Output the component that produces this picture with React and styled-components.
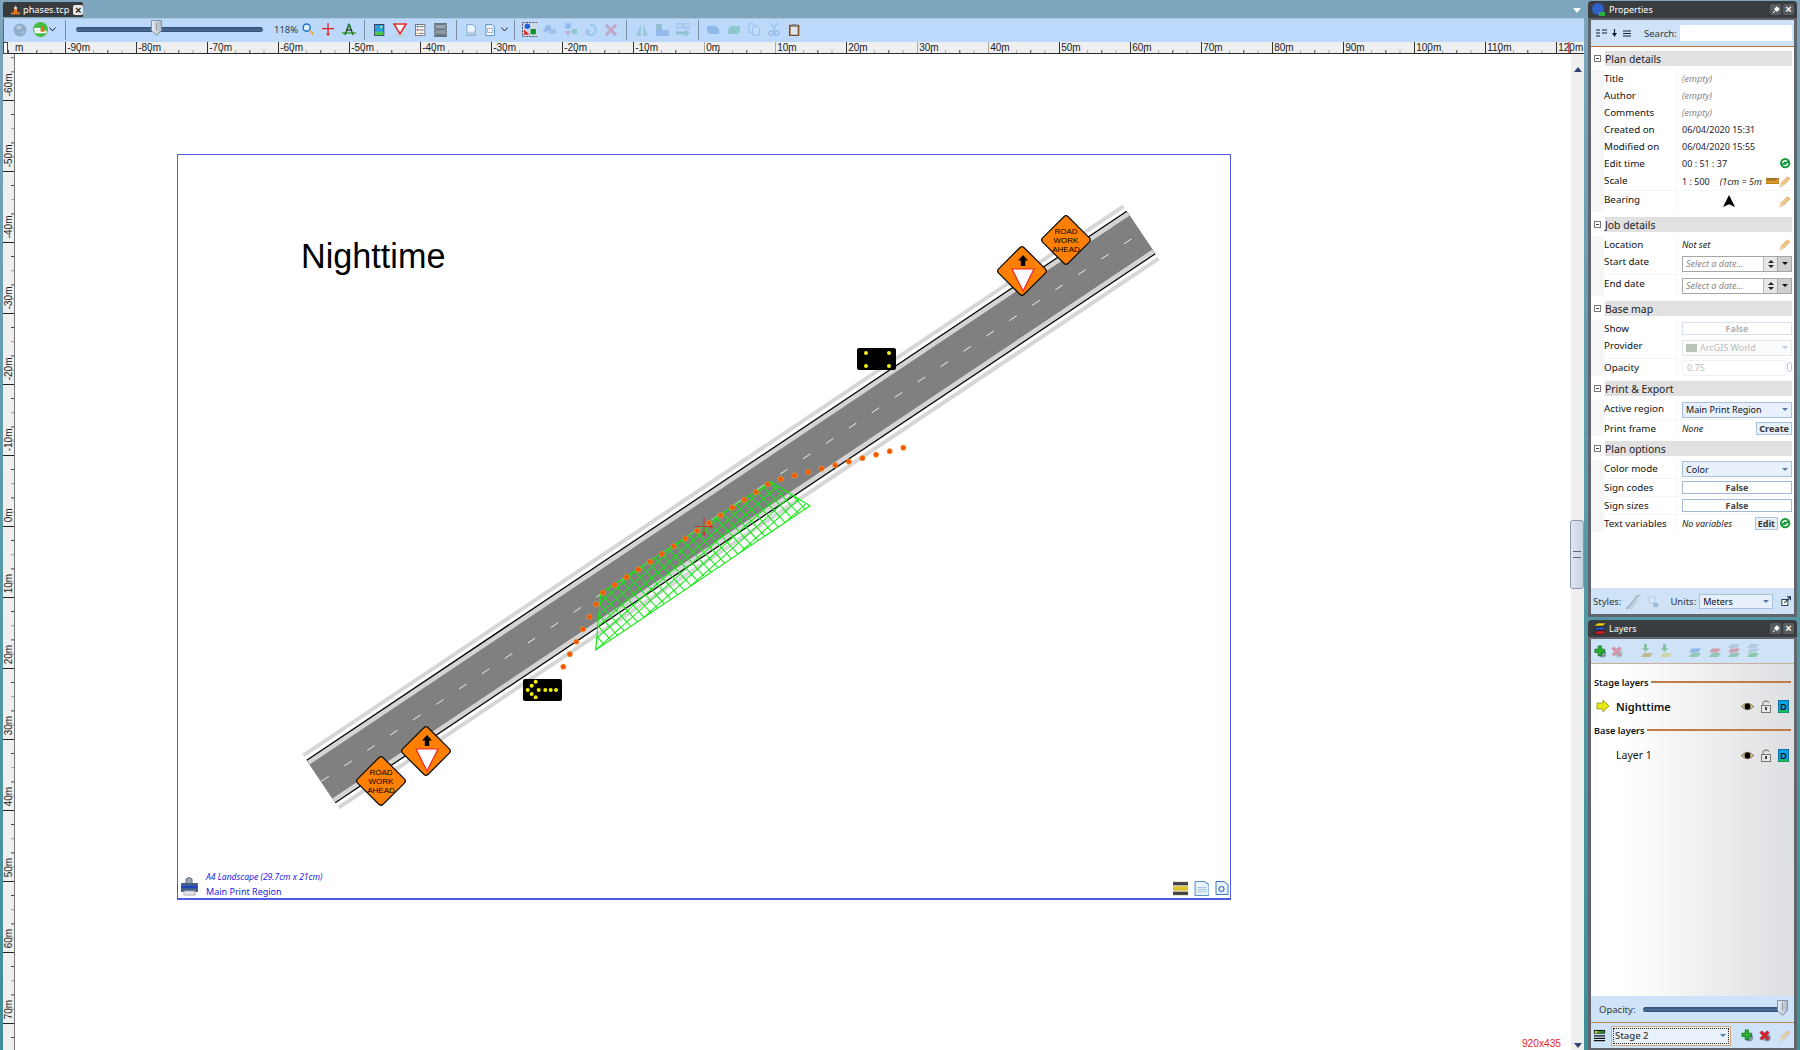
import React from "react";
import styled, { createGlobalStyle } from "styled-components";

const Global = createGlobalStyle`
  html, body { margin: 0; padding: 0; overflow: hidden; background: #fff; }
  * { box-sizing: border-box; }
`;
const UI = `"Noto Sans", "Open Sans", sans-serif`;
const ARIAL = `"Liberation Sans", Arial, sans-serif`;

const Root = styled.div`
  width: 1800px; height: 1050px; display: flex; overflow: hidden;
  font-family: ${UI}; color: #111;
  background: linear-gradient(180deg, #7ea5be 0%, #5f9cac 40%, #3d8f98 100%);
`;
const Main = styled.div`
  width: 1584px; height: 100%; display: flex; flex-direction: column; padding-left: 3px;
`;
const TabBar = styled.div`
  height: 18px; margin-left: -3px; padding: 2px 0 1px 3px; background: #7ea5be;
  display: flex; align-items: stretch; justify-content: space-between;
`;
const DocTab = styled.div`
  width: 80px; background: #383b3e; color: #fff; font-size: 9.2px; line-height: 15px;
  display: flex; align-items: center; gap: 3px; padding-left: 8px; border-radius: 2px 2px 0 0;
`;
const TabClose = styled.span`
  width: 10px; height: 10px; border-radius: 2px; background: #e8e8e8; color: #222; margin-left: 1px;
  font: bold 11px/10px ${ARIAL}; text-align: center;
`;
const TabMenu = styled.span`
  width: 0; height: 0; margin: 6px 3px 0 0; border: 4px solid transparent; border-top: 5px solid #fff; border-bottom: 0;
`;
const Toolbar = styled.div`
  height: 24px; background: #bcd9fb; display: flex; align-items: center; padding: 0 0 2px 9px;
  border-left: 1px solid #4f6f88; border-top: 1px solid #a9c6de;
`;
const Btn = styled.span`
  width: ${p => p.$w || 20.5}px; height: 16px; flex: none; display: flex; align-items: center; justify-content: center;
  margin-left: ${p => p.$ml || 0}px;
`;
const Sep = styled.span`
  width: 1px; height: 20px; flex: none; background: #7c8ea1; margin: 0 ${p => p.$mr ?? 4.5}px 0 ${p => p.$ml ?? 4.5}px;
`;
const Percent = styled.span`
  width: 24px; margin-left: 11px; font-size: 9.5px; color: #2d4050; flex: none; white-space: nowrap;
`;
const Track = styled.div`
  position: relative; width: ${p => p.$w}px; height: 5px; flex: none; border-radius: 3px;
  background: linear-gradient(180deg, #2f4f78, #4d6f96 60%, #30496b);
`;
const Thumb = styled.svg`
  position: absolute; left: ${p => p.$left}px; top: -7px; width: 11px; height: 16px;
`;
const RulerSvg = styled.svg`
  display: block; flex: none; background: #efefef;
`;
const Body = styled.div`
  flex: 1; min-height: 0; display: flex;
`;
const Canvas = styled.div`
  position: relative; flex: 1; background: #fff; overflow: hidden;
`;
const Drawing = styled.svg`
  position: absolute; left: 0; top: 0; width: 1556px; height: 996px;
`;
const Paper = styled.div`
  position: absolute; left: 162px; top: 100px; width: 1054px; height: 746px; border: 2px solid #4f5ce6;
  border-top-width: 1px; border-left-width: 1px; border-right-width: 1px;
`;
const PlanTitle = styled.div`
  position: absolute; left: 123px; top: 80px; font: 34.2px/42px ${ARIAL}; color: #000;
`;
const PaperInfo = styled.div`
  position: absolute; left: 3px; bottom: -1px; display: flex; align-items: flex-end; gap: 8px; color: #1c1ce0;
`;
const PrinterSlot = styled.span`
  margin-bottom: 3px;
`;
const PaperText = styled.div`
  font-size: 9px; line-height: 14.5px; white-space: nowrap;
`;
const PaperSize = styled.div`
  font-style: italic; font-size: 8.55px;
`;
const PaperTools = styled.div`
  position: absolute; right: 1px; bottom: 2px; display: flex; gap: 6px;
`;
const Dim = styled.div`
  position: absolute; right: 10px; bottom: 0; font: 10.2px/13px ${ARIAL}; color: #f02020;
`;
const Scroll = styled.div`
  width: 13px; background: #efefef; position: relative; display: flex; flex-direction: column; align-items: center; justify-content: space-between;
  padding: 13px 0 2px;
`;
const Arrow = styled.span`
  width: 0; height: 0; border: 4px solid transparent; border-left-width: 4px;
  ${p => p.$down ? `border-top: 5px solid #2f3f70; border-bottom: 0;` : `border-bottom: 5px solid #2f3f70; border-top: 0;`}
`;
const ScrollThumb = styled.div`
  position: absolute; top: 466px; left: -1px; width: 14px; height: 69px; border: 1px solid #8a97ad; border-radius: 3px;
  background: linear-gradient(90deg, #dfe6ef, #c7d3e2);
  display: flex; align-items: center; justify-content: center;
  &::after { content: ""; width: 8px; height: 5px; border-top: 1px solid #667; border-bottom: 1px solid #667; }
`;

const Side = styled.div`
  width: 216px; height: 100%; padding: 1px 3px 0 4px; display: flex; flex-direction: column; gap: 3px;
`;
const Panel = styled.div`
  display: flex; flex-direction: column; background: #60666b; border-radius: 4px 4px 0 0;
  padding: 0 3px 3px 3px; flex: ${p => p.$grow ? 1 : "none"}; height: ${p => p.$h ? p.$h + "px" : "auto"}; min-height: 0;
  padding-bottom: ${p => p.$pb ?? 3}px;
`;
const PanelHead = styled.div`
  height: 17px; margin: 0 -3px; padding: 0 3px 0 4px; background: #3a3d40; border-radius: 4px 4px 0 0; color: #fff;
  font-size: 9px; display: flex; align-items: center; gap: 3px; flex: none;
`;
const HeadBtn = styled.span`
  width: 11px; height: 11px; background: #5a5d60; border-radius: 2px; color: #fff; display: flex; align-items: center; justify-content: center;
  font: bold 11px/11px ${ARIAL}; margin-left: ${p => p.$auto ? "auto" : "-1px"};
`;
const PanelInner = styled.div`
  flex: 1; min-height: 0; margin-top: 2px; display: flex; flex-direction: column; background: #fff;
`;
const BlueBar = styled.div`
  height: ${p => p.$h}px; flex: none; background: #cfe3f8; display: flex; align-items: center;
  padding: 0 ${p => p.$pr ?? 2}px 0 ${p => p.$pl ?? 3}px;
  border-bottom: ${p => p.$line ? `1px solid ${p.$line}` : "0"};
  border-top: ${p => p.$top ? `1px solid ${p.$top}` : "0"};
  font-size: 9.5px; color: #333;
`;
const SearchLabel = styled.span`
  margin-left: 13px; font-size: 9.5px; color: #333; white-space: nowrap;
`;
const SearchBox = styled.span`
  flex: 1; height: 16px; background: #fff; border-radius: 2px; margin-left: 3px;
`;
const PropList = styled.div`
  flex: 1; padding-top: 4px; display: flex; flex-direction: column; background: #fff; min-height: 0;
`;
const Section = styled.section`
  margin-bottom: 5px;
`;
const SecHead = styled.div`
  display: flex; align-items: center; height: 15px; margin-bottom: 4px;
`;
const Toggle = styled.span`
  width: 7px; height: 7px; margin: 0 4px 0 3px; border: 1px solid #777; position: relative; flex: none;
  &::after { content: ""; position: absolute; left: 1px; right: 1px; top: 2px; height: 1px; background: #444; }
`;
const SecTitle = styled.div`
  flex: 1; height: 15px; margin-right: 2px; background: #e1e1e1; font-size: 10.4px; line-height: 16px; color: #222;
`;
const Rows = styled.div`
  display: flex; flex-direction: column; gap: 1px; background: #f6f6f6; margin-bottom: 0;
`;
const Row = styled.div`
  height: ${p => p.$h || 16}px; display: grid; grid-template-columns: 85px 1fr; gap: 1px;
`;
const Label = styled.div`
  padding-left: 13px; font-size: 9.8px; line-height: 17px; background: #fff; color: #111; white-space: nowrap;
  background-clip: content-box;
`;
const Value = styled.div`
  background: #fff; display: flex; align-items: center; padding: 0 2px 0 5px; font-size: 9px; color: #223; position: relative; white-space: nowrap; overflow: hidden;
`;
const Muted = styled.span`
  font-style: italic; color: ${p => p.$dark ? "#222" : "#888"}; margin-left: ${p => p.$ml || 0}px;
`;
const RightIcon = styled.span`
  margin-left: auto; display: flex; align-items: center; flex: none;
`;
const ToggleField = styled.div`
  flex: 1; height: ${p => p.$h || 13}px; border: 1px solid ${p => p.$off ? "#d6e2f0" : "#9fbad8"}; text-align: center; font-weight: 700; font-size: 9px;
  line-height: ${p => (p.$h || 13) - 2}px; color: ${p => p.$off ? "#b0b0b0" : "#444"};
`;
const Select = styled.div`
  flex: 1; height: ${p => p.$h || 16}px; border: 1px solid ${p => p.$off ? "#dfe8f3" : "#a8c0dc"}; background: ${p => p.$off ? "#fafcfe" : "#e7f0fb"};
  display: flex; align-items: center; padding: 0 3px; font-size: 9px; color: ${p => p.$off ? "#bbb" : "#112"}; gap: 3px;
  &::after { content: ""; margin-left: auto; border: 3px solid transparent; border-top: 3px solid ${p => p.$off ? "#bcd" : "#4f7fb0"}; border-bottom: 0; }
`;
const Swatch = styled.span`
  width: 11px; height: 8px; background: #b9c4b9; flex: none;
`;
const TxtBtn = styled.span`
  height: 13px; padding: 0 2px; border: 1px solid #aac3de; background: #e8f0fa; font-weight: 700; font-size: 9px; line-height: 11px; color: #333; margin-left: auto;
`;
const NumberBox = styled.div`
  flex: 1; height: 16px; border: 1px solid #eef1f5; border-radius: 2px; font-size: 9px; line-height: 14px; color: #bbb; padding-left: 4px; margin-right: 6px;
`;
const Diamondlet = styled.span`
  position: absolute; right: 2px; top: 3px; width: 5px; height: 10px; border: 1px solid #bcc8e8; border-radius: 3px;
`;
const DateBox = styled.div`
  flex: 1; height: 16px; border: 1px solid #a6a6a6; display: flex; align-items: stretch; font-style: italic; color: #888; font-size: 9px; line-height: 14px;
`;
const DateText = styled.span`
  flex: 1; padding-left: 3px;
`;
const Spin = styled.span`
  width: 14px; display: flex; flex-direction: column; align-items: center; justify-content: center; gap: 2px; background: #e7e7e7; border-left: 1px solid #bbb;
  &::before { content: ""; border: 3px solid transparent; border-bottom: 3px solid #222; border-top: 0; }
  &::after { content: ""; border: 3px solid transparent; border-top: 3px solid #222; border-bottom: 0; }
`;
const Drop = styled.span`
  width: 14px; background: #cfcfcf; border-left: 1px solid #aaa; display: flex; align-items: center; justify-content: center;
  &::after { content: ""; border: 3px solid transparent; border-top: 3px solid #111; border-bottom: 0; }
`;
const Spacer = styled.span`
  flex: ${p => p.$f ? 1 : "none"}; width: ${p => p.$w || 0}px;
`;
const UnitSelect = styled(Select)`
  flex: none; width: 74px; height: 15px; margin-left: 3px;
`;
const LayerArea = styled.div`
  flex: 1; background: linear-gradient(90deg, #fff 0%, #fff 15%, #dcdee1 100%); padding: 12px 3px 0 3px; display: flex; flex-direction: column;
`;
const GroupTitle = styled.div`
  display: flex; align-items: center; gap: 2px; font-size: 9.2px; font-weight: 600; height: 12px; white-space: nowrap; color: #111;
  &::after { content: ""; flex: 1; height: 2px; background: #c27b47; }
`;
const LayerRow = styled.div`
  display: flex; align-items: center; height: ${p => p.$h || 36}px;
  font-size: ${p => p.$b ? 11 : 10.5}px; font-weight: ${p => p.$b ? 600 : 400}; color: #111;
`;
const LayerLead = styled.span`
  width: 20px; margin-right: 0; flex: none; display: flex; padding-left: 2px;
`;
const LayerIcons = styled.span`
  margin-left: auto; display: flex; align-items: center; gap: 7px; padding-right: 2px;
`;
const OpacityLabel = styled.span`
  font-size: 9.5px; color: #333; margin-right: 8px;
`;
const StageSelect = styled.div`
  width: 124px; height: 20px; margin: 0 10px 0 5px; border: 1px solid #dca67c; background: #e9f1fb; padding: 1px; display: flex;
`;
const StageInner = styled.div`
  flex: 1; border: 1px dotted #222; font-size: 9.5px; font-weight: 500; line-height: 15px; padding-left: 1px; display: flex; align-items: center; padding-right: 2px;
  &::after { content: ""; margin-left: auto; border: 3px solid transparent; border-top: 3px solid #4f7fb0; border-bottom: 0; }
`;

const Ico = styled.svg.attrs(p => ({ width: p.$w || 14, height: p.$h || p.$w || 14, viewBox: p.$vb || "0 0 14 14" }))`
  display: block; flex: none; opacity: ${p => p.$o ?? 1};
`;

const Globe = () => <Ico $o={.75}><circle cx="7" cy="7" r="6.5" fill="#7f9fb8" /><path d="M3 4q3-3 6-1l-1 3-3 1zM8 9l3-1-1 3z" fill="#b9c6cf" /></Ico>;
const ConeBadge = () => <Ico $w={15}><circle cx="7" cy="7" r="7" fill="#46bb3e" /><path d="M1.5 8h11v2.5h-11z" fill="#fff" /><path d="M1 5.5h6v2.5H1z" fill="#fff" /><path d="M9 3l2 6H7z" fill="#e8661c" /></Ico>;
const Chev = () => <Ico $w={7} $h={5} $vb="0 0 7 5"><path d="M.5.5L3.5 4 6.5.5" fill="none" stroke="#223" strokeWidth="1" /></Ico>;
const Magnifier = () => <Ico $w={13}><circle cx="5" cy="5" r="3.8" fill="#dff0ff" stroke="#1e74d0" strokeWidth="1.6" /><path d="M8 8l4.5 4.5" stroke="#e8a93a" strokeWidth="2" /></Ico>;
const RedCross = () => <Ico $w={13}><path d="M6.5 0v13M0 6h13" stroke="#e01818" strokeWidth="1.3" /><path d="M6.5 14l-2-3h4z" fill="#e01818" /></Ico>;
const Compass = () => <Ico><path d="M0 10h14" stroke="#3ca03c" strokeWidth="1.5" /><path d="M7 1L3 12M7 1l4 11" stroke="#2c6a22" strokeWidth="1.6" fill="none" /><path d="M4.5 7h5" stroke="#111" /><circle cx="7" cy="2" r="1.5" fill="#385" /></Ico>;
const PicIco = () => <Ico $w={12}><rect x=".5" y=".5" width="11" height="13" fill="#2a9fe0" stroke="#335" /><rect x="1" y="9" width="10" height="4" fill="#4cc94c" /><circle cx="8.5" cy="3.5" r="1.2" fill="#ff0" /></Ico>;
const YieldIco = () => <Ico><path d="M1 1h12L7 11z" fill="#fff" stroke="#ea2c2c" strokeWidth="1.6" /><rect x="2" y="11.5" width="10" height="2" fill="#bcc" /></Ico>;
const ListIco = () => <Ico $w={12}><rect x=".5" y=".5" width="11" height="13" fill="#f8f8f8" stroke="#667" /><rect x="2" y="2" width="2" height="2" fill="#2b62d9" /><rect x="2" y="6" width="2" height="2" fill="#d33" /><rect x="2" y="10" width="2" height="2" fill="#e8a020" /><path d="M5 3h5M5 7h5M5 11h5" stroke="#555" /></Ico>;
const FilmIco = () => <Ico><rect width="13" height="14" fill="#66757f" /><rect x="2" y="2" width="9" height="3.5" fill="#9aa7b0" /><rect x="2" y="7" width="9" height="4" fill="#8b98a1" /><path d="M1 1v12M12 1v12" stroke="#bcc6cc" strokeDasharray="1 1" /></Ico>;
const PageIco = () => <Ico $w={12}><path d="M1 .5h7l3 3v10H1z" fill="#eaf4ff" stroke="#6aa0d0" /><rect x="1.5" y="9" width="9" height="4" fill="#bcd" /></Ico>;
const Page2Ico = () => <Ico $w={12}><path d="M1 .5h7l3 3v10H1z" fill="#f4f9ff" stroke="#3f87c8" /><rect x="3" y="5" width="6" height="5" fill="none" stroke="#557" strokeDasharray="1 1" /></Ico>;
const SelIco = () => <Ico $w={15}><rect x=".5" y=".5" width="14" height="13" fill="#d0dbe6" stroke="#556" strokeDasharray="2 1" /><circle cx="5" cy="4" r="2.6" fill="#1f5fe0" /><path d="M2 7l5 5H2z" fill="#d22" /><rect x="8" y="6.5" width="5" height="5" fill="#119033" /></Ico>;
const F = ({ children, w = 14 }) => <Ico $w={w} $o={.28}>{children}</Ico>;
const Faint1 = () => <F><circle cx="5" cy="5" r="3" fill="#2b72c9" /><path d="M0 7l4-3v6z" fill="#2b72c9" /><rect x="6" y="6" width="7" height="5" fill="#5c8cc4" /></F>;
const Faint2 = () => <F><circle cx="5" cy="3" r="3" fill="#2b72c9" /><path d="M2 8h6L5 13z" fill="#c0406a" /><rect x="9" y="6" width="5" height="5" fill="#1e9f60" /></F>;
const Faint3 = () => <F><path d="M6 2a5 5 0 1 1-4 7" fill="none" stroke="#4f8fd0" strokeWidth="2" /><path d="M1 6l5 1-2 4z" fill="#4f8fd0" /></F>;
const Faint4 = () => <F><path d="M2 2l10 10M12 2L2 12" stroke="#c8283e" strokeWidth="3" /></F>;
const Faint5 = () => <F><path d="M6 1v12H1zM8 1v12h5z" fill="#3f9a7a" /></F>;
const Faint6 = () => <F><rect x="1" y="1" width="6" height="6" fill="#2a8060" /><rect x="1" y="7" width="13" height="6" fill="#2b72c9" /></F>;
const Faint7 = () => <F><rect x="0" y="0" width="6" height="5" fill="#bcd" stroke="#2b72c9" /><rect x="8" y="0" width="6" height="5" fill="#bcd" stroke="#2b72c9" /><path d="M0 10h10" stroke="#2a9060" strokeWidth="3" /><path d="M9 6l5 4-5 4z" fill="#2a9060" /></F>;
const Undo = () => <F><path d="M1 3h8q4 1 4 5v3H5q-3 0-4-3z" fill="#1f6fc0" /></F>;
const Redo = () => <F><path d="M13 3H5Q1 4 1 8v3h8q3 0 4-3z" fill="#1f9e60" /></F>;
const Copy = () => <F w={13}><path d="M1 1h5l2 2v7H1z" fill="#cde" stroke="#2b72c9" /><path d="M5 4h5l2 2v7H5z" fill="#e5eef8" stroke="#2b72c9" /></F>;
const Cut = () => <F w={13}><path d="M3 0l5 9M10 0L5 9" stroke="#48a" strokeWidth="1.4" /><circle cx="3.5" cy="11" r="2.3" fill="none" stroke="#1f6fc0" strokeWidth="1.4" /><circle cx="9.5" cy="11" r="2.3" fill="none" stroke="#1f6fc0" strokeWidth="1.4" /></F>;
const Clip = () => <Ico $w={12}><rect x=".5" y="1.5" width="11" height="12" fill="#a86a2a" stroke="#6b3f14" /><rect x="2" y="3" width="8" height="9.5" fill="#d8e6f4" /><rect x="3.5" y="0" width="5" height="3" fill="#889" /></Ico>;

const Pencil = ({ o = 1 }) => <Ico $w={13} $o={o}><path d="M2 9l7-7 3 2-7 7-4 2z" fill="#eec58a" stroke="#d9a666" strokeWidth=".8" /><path d="M1 13l1-4 3 2z" fill="#f3e0c0" /></Ico>;
const Refresh = () => <Ico $w={12}><circle cx="6" cy="6" r="6" fill="#1a9a3e" /><path d="M3 6a3 3 0 0 1 5-2M9 6a3 3 0 0 1-5 2" stroke="#fff" strokeWidth="1.5" fill="none" /></Ico>;
const RulerIco = () => <Ico $w={13} $h={6} $vb="0 0 13 6"><rect width="13" height="6" fill="#e09a2c" stroke="#7a5417" strokeWidth=".6" /><path d="M2 0v3M4 0v3M6 0v3M8 0v3M10 0v3" stroke="#543" strokeWidth=".7" /></Ico>;
const North = () => <Ico $w={13}><path d="M6.5 0L13 13 6.5 10 0 13z" fill="#000" /></Ico>;
const SortA = () => <Ico $w={11} $h={8} $vb="0 0 11 8"><path d="M0 1h4M0 4h4M0 7h4M6 1h5M6 4h5" stroke="#123" /></Ico>;
const SortB = () => <Ico $w={5} $h={8} $vb="0 0 5 8"><path d="M2.5 0v6" stroke="#123" strokeWidth="1.2" /><path d="M0 4h5L2.5 8z" fill="#123" /></Ico>;
const SortC = () => <Ico $w={8} $h={7} $vb="0 0 8 7"><path d="M0 1h8M0 3.5h8M0 6h8" stroke="#123" /></Ico>;
const Hatch = () => <Ico $o={.55} $w={15}><path d="M0 13L9 1h5L5 14H0z" fill="#8a99aa" /><path d="M3 14L12.5 2M1 11L10 1" stroke="#fff" strokeWidth=".9" /></Ico>;
const Save = () => <Ico $o={.45} $w={12}><path d="M1 1h7v7H1z" fill="#dfeeff" stroke="#9ab" /><rect x="6" y="8" width="6" height="5" fill="#6a8fb0" /></Ico>;
const Expand = () => <Ico $w={12}><rect x="1" y="4" width="7" height="7" fill="#fff" stroke="#123" /><path d="M4 8l7-7M7 1h4v4" stroke="#123" fill="none" strokeWidth="1.2" /></Ico>;
const PlusGreen = ({ w = 13 }) => <Ico $w={w}><circle cx="9" cy="9.5" r="4" fill="#7f96a4" /><path d="M4.5 1h3.5v3.5h3.5V8H8v3.5H4.5V8H1V4.5h3.5z" fill="#29b12f" stroke="#0e6a1a" strokeWidth=".8" /></Ico>;
const CrossRed = ({ o = 1, w = 13 }) => <Ico $w={w} $o={o}><circle cx="8.5" cy="9.5" r="4" fill="#7f96a4" /><path d="M3 2l3 2.5L9 2l2 2-3 3 3 3-2 2-3-3-3 3-2-2 3-3-3-3z" fill="#e3212d" stroke="#8e1218" strokeWidth=".6" /></Ico>;
const LayersIco = () => <Ico><path d="M3 3l3-2h8l-3 3H1z" fill="#f2cf1d" stroke="#111" strokeWidth=".5" /><path d="M3 7l3-2h8l-3 3H1z" fill="#2b55d0" stroke="#111" strokeWidth=".5" /><path d="M3 11l3-2h8l-3 3H1z" fill="#e21b1b" stroke="#111" strokeWidth=".5" /></Ico>;
const PropIco = () => <Ico><circle cx="6" cy="6" r="6" fill="#2f5fc8" /><path d="M7 9h6v4H7z" fill="#2fae3a" /></Ico>;
const ConeIco = () => <Ico $w={9} $h={13} $vb="0 0 12 14"><path d="M6 0l3 11H3z" fill="#ee7a1c" /><rect x="4" y="4" width="4" height="2" fill="#fff" /><rect x="0" y="11" width="12" height="2.5" fill="#ee7a1c" /></Ico>;
const PinGlyph = () => <Ico $w={8} $vb="0 0 8 8"><path d="M1 7l2.5-2.5M2.5 3L5 .8 7.2 3 5 5.5z" fill="#fff" stroke="#fff" /></Ico>;
const Eye = () => <Ico $w={13} $h={9} $vb="0 0 13 9"><path d="M.3 4.5Q6.5-2 12.7 4.5 6.5 11 .3 4.5z" fill="#e4c98a" stroke="#3a3018" strokeWidth=".6" /><circle cx="6.5" cy="4.5" r="2.9" fill="#000" /></Ico>;
const Lock = () => <Ico $w={10} $h={13} $vb="0 0 10 13"><path d="M2 5V2.5Q5-.5 8 2.5" fill="none" stroke="#888" strokeWidth="1.2" /><rect x=".5" y="5.5" width="9" height="7" fill="#e8e8e8" stroke="#777" /><rect x="4" y="7" width="2" height="3" fill="#444" /></Ico>;
const DBadge = () => <Ico $w={11} $h={13} $vb="0 0 11 13"><rect width="11" height="13" fill="#0aa5e8" stroke="#124" strokeWidth=".8" /><rect x=".5" y="10.5" width="10" height="2" fill="#1cc43c" /><text x="5.5" y="9.5" textAnchor="middle" fontSize="9" fontWeight="700" fontFamily={ARIAL} fill="#111">D</text></Ico>;
const YellowArrow = () => <Ico><path d="M1 4h6V1l6 6-6 6v-3H1z" fill="#e6ea14" stroke="#a6a822" /></Ico>;
const LayerFaint = ({ a, b, c }) => <Ico $o={.4}>{c && <path d="M2 4L5 0h9l-3 4z" fill={c} />}<path d="M2 8.5L5 4.5h9l-3 4z" fill={a} /><path d="M2 13l3-4h9l-3 4z" fill={b} /></Ico>;
const DownLay = ({ col }) => <Ico $o={.5}><path d="M5 0h3v4h2L6.5 8 3 4h2z" fill="#49a04a" /><path d="M2 13l3-4h9l-3 4z" fill={col} /></Ico>;
const StackIco = () => <Ico $w={13}><rect x="1" y="1" width="12" height="4" fill="#111" /><rect x="2" y="2" width="3" height="2.5" fill="#e8cf20" /><rect x="5.5" y="2" width="3" height="2.5" fill="#2da02d" /><rect x="9" y="2" width="3" height="2.5" fill="#2da02d" /><path d="M1 7.5h12M1 10h12M1 12.5h12" stroke="#111" strokeWidth="1.4" /></Ico>;
const Printer = () => <Ico $w={17} $h={20} $vb="0 0 17 20"><path d="M5 8V3q3-3 6 0v5" fill="#9aa6b0" stroke="#667" /><rect x="0" y="7" width="17" height="9" rx="1" fill="#3f5f85" /><rect x="1" y="10" width="15" height="2" fill="#1f40c0" /><rect x="3" y="15" width="11" height="4" fill="#e6e6e6" stroke="#aab" /></Ico>;
const StackSmall = () => <Ico $w={15}><rect width="15" height="14" fill="#e8e8d0" /><rect y="1" width="15" height="3" fill="#444" /><rect y="5" width="15" height="4" fill="#e0c230" /><rect y="10" width="15" height="3" fill="#444" /></Ico>;
const DocSmall = () => <Ico $w={15}><path d="M1 .5h9l4 3v10H1z" fill="#e8f2fc" stroke="#5b93c7" /><path d="M3 6h9M3 8h9M3 10h9" stroke="#a8c6e0" /></Ico>;
const DocSearch = () => <Ico $w={14}><path d="M1 .5h8l4 3v10H1z" fill="#e8f2fc" stroke="#3c78b8" /><circle cx="6.5" cy="8" r="2.6" fill="none" stroke="#1d4fb8" /></Ico>;

const SliderThumb = ({ left }) => (
  <Thumb $left={left} viewBox="0 0 11 16">
    <defs><linearGradient id="th" x1="0" x2="1"><stop offset="0" stopColor="#e9edf1" /><stop offset="1" stopColor="#aeb7c0" /></linearGradient></defs>
    <path d="M.5.5h10v10l-5 5-5-5z" fill="url(#th)" stroke="#7c93ad" />
    <path d="M5.5 3v7" stroke="#8a97a5" />
  </Thumb>
);

const X0 = 704.2, PX = 7.1;
const lightMajor = new Set([0, 10, 30, 40]);
const HRuler = () => {
  const marks = [];
  for (let m = -100; m <= 120; m += 10) marks.push(m);
  return (
    <RulerSvg width="1581" height="12" viewBox="3 42 1581 12">
      {marks.map(m => {
        const x = X0 + m * PX;
        return (
          <g key={m}>
            {[1, 2, 3, 4].map(k => <line key={k} x1={x + k * 14.2} x2={x + k * 14.2} y1="50" y2="53" stroke={k % 2 ? "#444" : "#aaa"} />)}
            {m > -100 && <line x1={Math.round(x) + .5} x2={Math.round(x) + .5} y1="42" y2="53" stroke={lightMajor.has(m) ? "#aaa" : "#333"} />}
            {m > -100 && <text x={x + 2} y="51" fontFamily={ARIAL} fontSize="10" fill="#222">{m}m</text>}
          </g>
        );
      })}
      <text x="15" y="51" fontFamily={ARIAL} fontSize="10" fill="#222">m</text>
      <line x1="1569" x2="1569" y1="42" y2="53" stroke="#ee1111" strokeWidth="1.2" />
      <line x1="3" x2="1584" y1="53.5" y2="53.5" stroke="#2a2a2a" />
      <rect x="3.5" y="42.5" width="4" height="11" fill="#fff" stroke="#445" />
    </RulerSvg>
  );
};
const VRuler = () => {
  const marks = [];
  for (let m = -60; m <= 70; m += 10) marks.push(m);
  const Y = m => 526.3 + m * PX;
  return (
    <RulerSvg width="12" height="996" viewBox="3 54 12 996">
      <rect x="3" y="54" width="12" height="996" fill="#efefef" />
      {marks.map(m => {
        const y = Y(m);
        return (
          <g key={m}>
            {[1, 2, 3, 4].map(k => <line key={k} x1="11" x2="15" y1={y + k * 14.2} y2={y + k * 14.2} stroke={k % 2 ? "#444" : "#999"} />)}
            {m === -60 && [1, 2].map(k => <line key={k} x1="11" x2="15" y1={y - 14.2 * (k + 1)} y2={y - 14.2 * (k + 1)} stroke="#666" />)}
            <line x1="3" x2="15" y1={Math.round(y) + .5} y2={Math.round(y) + .5} stroke="#222" />
            <text transform={`translate(11.5 ${y - 4}) rotate(-90)`} fontFamily={ARIAL} fontSize="10" fill="#222">{m}m</text>
          </g>
        );
      })}
      <line x1="14.5" x2="14.5" y1="54" y2="1050" stroke="#777" />
    </RulerSvg>
  );
};

const lerp = (a, b, n) => Array.from({ length: n }, (_, i) => [a[0] + (b[0] - a[0]) * i / (n - 1), a[1] + (b[1] - a[1]) * i / (n - 1)]);
const cones = [
  ...lerp([903.3, 447.7], [780.7, 479], 10),
  ...lerp([767.7, 484.3], [603, 592.7], 15),
  ...lerp([596, 604.3], [563.3, 666.7], 6),
];

const Diamond = ({ x, y, children }) => (
  <g transform={`translate(${x} ${y})`}>
    <rect x="-18" y="-18" width="36" height="36" rx="3" transform="rotate(45)" fill="#ff8000" stroke="#111" strokeWidth="1.3" />
    {children}
  </g>
);
const RoadWork = ({ x, y }) => (
  <Diamond x={x} y={y}>
    <g fontFamily={ARIAL} fontSize="8" textAnchor="middle" fill="#000">
      <text y="-6">ROAD</text>
      <text y="3">WORK</text>
      <text y="12">AHEAD</text>
    </g>
  </Diamond>
);
const YieldAhead = ({ x, y }) => (
  <Diamond x={x} y={y}>
    <path d="M1-16l5 5.5H3.2V-5h-4.4v-5.5H-4z" fill="#000" />
    <path d="M-10-2H12L1 20z" fill="#fff" stroke="#ee2030" strokeWidth="1.2" />
  </Diamond>
);
const Dot = ({ p }) => <circle cx={p[0]} cy={p[1]} r="2" fill="#f4f010" />;
const roadLine = { x1: 321, y1: 781.5, x2: 1141, y2: 232.5 };

const Plan = () => (
  <Drawing viewBox="15 54 1556 996">
    <defs>
      <pattern id="hatch" width="8" height="8" patternUnits="userSpaceOnUse" patternTransform="rotate(-42 600 593)">
        <path d="M0 .5H8M.5 0V8" stroke="#10ea10" strokeWidth="1.05" fill="none" />
      </pattern>
    </defs>
    <line {...roadLine} stroke="#d6d6d6" strokeWidth="67" />
    <line {...roadLine} stroke="#fff" strokeWidth="59" />
    <line {...roadLine} stroke="#000" strokeWidth="52.5" />
    <line {...roadLine} stroke="#d4d4d4" strokeWidth="50" />
    <line {...roadLine} stroke="#808080" strokeWidth="41" />
    <line {...roadLine} stroke="#eee" strokeWidth="1" strokeDasharray="9 18.6" strokeDashoffset="-0.4" />
    <path d="M770.7 481.7L810 505.7 595.7 650 600.7 593.3z" fill="url(#hatch)" stroke="#10ea10" strokeWidth="1.1" />
    {cones.map((p, i) => <circle key={i} cx={p[0]} cy={p[1]} r="2.6" fill="#f25500" stroke="#f2a030" strokeWidth=".6" />)}
    <g stroke="#dc2030" strokeWidth="1" fill="#dc2030" opacity=".85">
      <path d="M695 526.5H712M704 517V535" fill="none" />
      <path d="M714 526.5l-4-2v4zM704 536.5l-2-4h4z" stroke="none" />
    </g>
    <RoadWork x={381} y={781} />
    <YieldAhead x={426} y={751} />
    <RoadWork x={1066} y={240} />
    <YieldAhead x={1022} y={271} />
    <rect x="523" y="679" width="39" height="22" rx="2" fill="#000" />
    {[[535.7, 681.7], [531.7, 685.7], [527.7, 690], [531.7, 694], [535.7, 697.3], [538.7, 690], [545.3, 690], [550.7, 690], [556, 690]].map((p, i) => <Dot key={i} p={p} />)}
    <rect x="857" y="348" width="39" height="22" rx="2" fill="#000" />
    {[[866, 353], [866, 366], [889, 353], [889, 366]].map((p, i) => <Dot key={i} p={p} />)}
  </Drawing>
);

const PropRow = ({ h, label, children }) => (
  <Row $h={h}><Label>{label}</Label><Value>{children}</Value></Row>
);
const Sec = ({ title, children }) => (
  <Section>
    <SecHead><Toggle /><SecTitle>{title}</SecTitle></SecHead>
    <Rows>{children}</Rows>
  </Section>
);
const DateField = () => (
  <DateBox><DateText>Select a date...</DateText><Spin /><Drop /></DateBox>
);

export default function App() {
  return (
    <Root>
      <Global />
      <Main>
        <TabBar>
          <DocTab><ConeIco />phases.tcp<TabClose>×</TabClose></DocTab>
          <TabMenu />
        </TabBar>
        <Toolbar>
          <Btn $w={14}><Globe /></Btn>
          <Btn $w={14} $ml={6}><ConeBadge /></Btn>
          <Btn $w={10}><Chev /></Btn>
          <Sep $ml={8} $mr={10} />
          <Track $w={187}><SliderThumb left={75} /></Track>
          <Percent>118%</Percent>
          <Btn><Magnifier /></Btn><Btn><RedCross /></Btn><Btn><Compass /></Btn>
          <Sep />
          <Btn><PicIco /></Btn><Btn><YieldIco /></Btn><Btn><ListIco /></Btn><Btn><FilmIco /></Btn>
          <Sep />
          <Btn><PageIco /></Btn><Btn $w={17}><Page2Ico /></Btn><Btn $w={10}><Chev /></Btn>
          <Sep />
          <Btn><SelIco /></Btn><Btn><Faint1 /></Btn><Btn><Faint2 /></Btn><Btn><Faint3 /></Btn><Btn><Faint4 /></Btn>
          <Sep />
          <Btn><Faint5 /></Btn><Btn><Faint6 /></Btn><Btn><Faint7 /></Btn>
          <Sep />
          <Btn><Undo /></Btn><Btn><Redo /></Btn><Btn><Copy /></Btn><Btn><Cut /></Btn><Btn><Clip /></Btn>
        </Toolbar>
        <HRuler />
        <Body>
          <VRuler />
          <Canvas>
            <Plan />
            <Paper>
              <PlanTitle>Nighttime</PlanTitle>
              <PaperInfo>
                <PrinterSlot><Printer /></PrinterSlot>
                <PaperText>
                  <PaperSize>A4 Landscape (29.7cm x 21cm)</PaperSize>
                  Main Print Region
                </PaperText>
              </PaperInfo>
              <PaperTools><StackSmall /><DocSmall /><DocSearch /></PaperTools>
            </Paper>
            <Dim>920x435</Dim>
          </Canvas>
          <Scroll><Arrow /><ScrollThumb /><Arrow $down /></Scroll>
        </Body>
      </Main>
      <Side>
        <Panel $h={616}>
          <PanelHead><PropIco />Properties<HeadBtn $auto><PinGlyph /></HeadBtn><HeadBtn>×</HeadBtn></PanelHead>
          <PanelInner>
            <BlueBar $h={27} $line="#c07038" $pl={5}>
              <SortA /><Spacer $w={5} /><SortB /><Spacer $w={6} /><SortC />
              <SearchLabel>Search:</SearchLabel><SearchBox />
            </BlueBar>
            <PropList>
              <Sec title="Plan details">
                <PropRow label="Title"><Muted>(empty)</Muted></PropRow>
                <PropRow label="Author"><Muted>(empty)</Muted></PropRow>
                <PropRow label="Comments"><Muted>(empty)</Muted></PropRow>
                <PropRow label="Created on">06/04/2020 15:31</PropRow>
                <PropRow label="Modified on">06/04/2020 15:55</PropRow>
                <PropRow label="Edit time">00 : 51 : 37<RightIcon><Refresh /></RightIcon></PropRow>
                <PropRow h={18} label="Scale">1 : 500<Muted $dark $ml={10}>(1cm = 5m</Muted><RightIcon><RulerIco /><Pencil /></RightIcon></PropRow>
                <PropRow h={21} label="Bearing"><Spacer $f /><North /><Spacer $w={43} /><Pencil /></PropRow>
              </Sec>
              <Sec title="Job details">
                <PropRow label="Location"><Muted $dark>Not set</Muted><RightIcon><Pencil /></RightIcon></PropRow>
                <PropRow h={21} label="Start date"><DateField /></PropRow>
                <PropRow h={21} label="End date"><DateField /></PropRow>
              </Sec>
              <Sec title="Base map">
                <PropRow label="Show"><ToggleField $off>False</ToggleField></PropRow>
                <PropRow h={21} label="Provider"><Select $off><Swatch />ArcGIS World</Select></PropRow>
                <PropRow h={17} label="Opacity"><NumberBox>0.75</NumberBox><Diamondlet /></PropRow>
              </Sec>
              <Sec title="Print & Export">
                <PropRow h={19} label="Active region"><Select>Main Print Region</Select></PropRow>
                <PropRow label="Print frame"><Muted $dark>None</Muted><TxtBtn>Create</TxtBtn></PropRow>
              </Sec>
              <Sec title="Plan options">
                <PropRow h={18} label="Color mode"><Select>Color</Select></PropRow>
                <PropRow h={17} label="Sign codes"><ToggleField>False</ToggleField></PropRow>
                <PropRow h={17} label="Sign sizes"><ToggleField>False</ToggleField></PropRow>
                <PropRow h={17} label="Text variables"><Muted $dark>No variables</Muted><TxtBtn>Edit</TxtBtn><Spacer $w={2} /><Refresh /></PropRow>
              </Sec>
            </PropList>
            <BlueBar $h={26} $pl={2} $top="#dde">
              Styles:<Spacer $w={5} /><Hatch /><Spacer $w={7} /><Save /><Spacer $w={10} />Units:<UnitSelect>Meters</UnitSelect><Spacer $w={8} /><Expand />
            </BlueBar>
          </PanelInner>
        </Panel>
        <Panel $grow $pb={2}>
          <PanelHead><LayersIco />Layers<HeadBtn $auto><PinGlyph /></HeadBtn><HeadBtn>×</HeadBtn></PanelHead>
          <PanelInner>
            <BlueBar $h={25} $line="#c8b098" $pl={3}>
              <PlusGreen /><Spacer $w={4} /><CrossRed o={.4} /><Spacer $w={15} />
              <DownLay col="#b38a2a" /><Spacer $w={5} /><DownLay col="#c8c84a" /><Spacer $w={15} />
              <LayerFaint a="#2b72c9" b="#3a9a5a" /><Spacer $w={6} /><LayerFaint a="#c83a4a" b="#3a9a5a" /><Spacer $w={5} />
              <LayerFaint a="#c83a4a" b="#3a9a5a" c="#8ab" /><Spacer $w={5} /><LayerFaint a="#8ab" b="#2ea02e" c="#8ab" />
            </BlueBar>
            <LayerArea>
              <GroupTitle>Stage layers</GroupTitle>
              <LayerRow $b>
                <LayerLead><YellowArrow /></LayerLead><Spacer $w={2} />Nighttime
                <LayerIcons><Eye /><Lock /><DBadge /></LayerIcons>
              </LayerRow>
              <GroupTitle>Base layers</GroupTitle>
              <LayerRow $h={38}>
                <LayerLead /><Spacer $w={2} />Layer 1
                <LayerIcons><Eye /><Lock /><DBadge /></LayerIcons>
              </LayerRow>
            </LayerArea>
            <BlueBar $h={27} $line="#c8864f" $pl={8} $pr={4}>
              <OpacityLabel>Opacity:</OpacityLabel>
              <Track $w={144}><SliderThumb left={134} /></Track>
            </BlueBar>
            <BlueBar $h={25} $pl={2}>
              <StackIco /><StageSelect><StageInner>Stage 2</StageInner></StageSelect>
              <PlusGreen w={13} /><Spacer $w={5} /><CrossRed /><Spacer $w={7} /><Pencil o={.7} />
            </BlueBar>
          </PanelInner>
        </Panel>
      </Side>
    </Root>
  );
}
